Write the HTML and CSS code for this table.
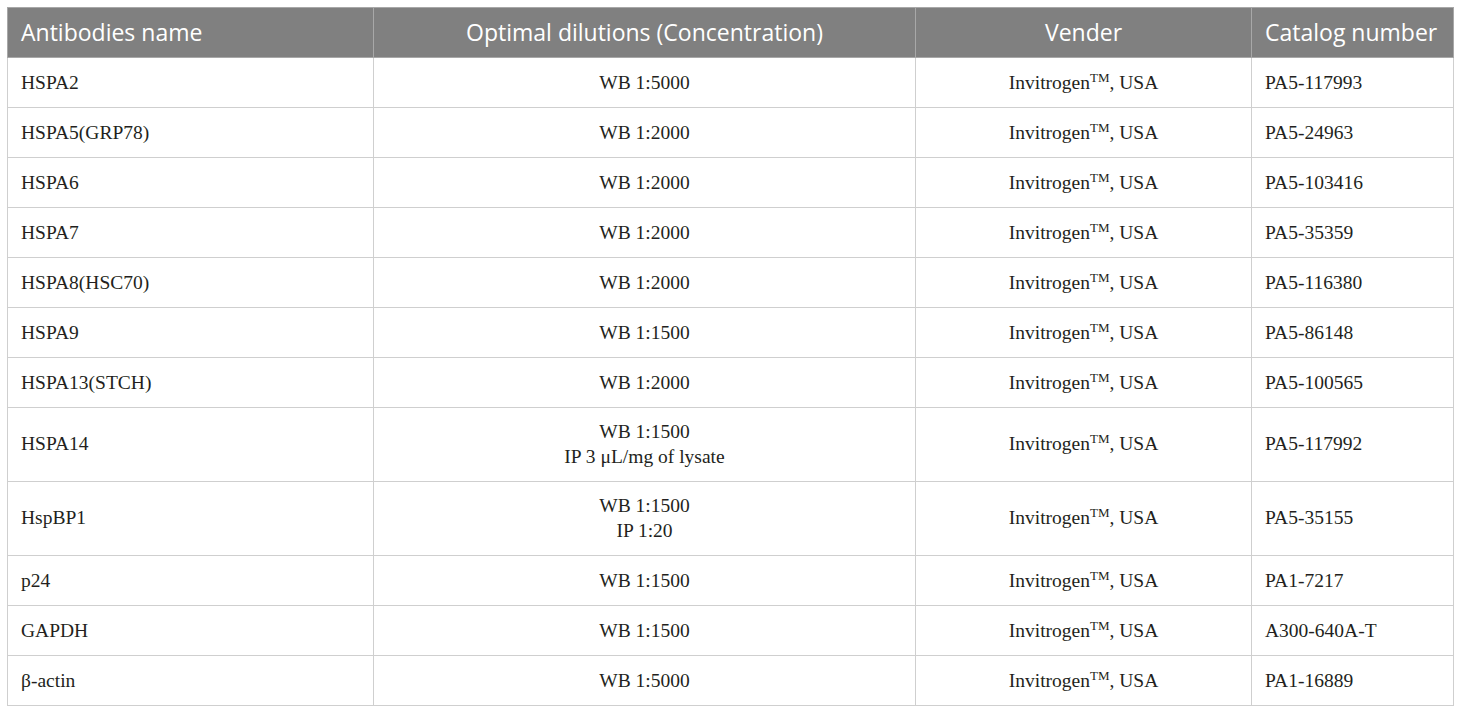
FILE: index.html
```html
<!DOCTYPE html>
<html>
<head>
<meta charset="utf-8">
<link rel="stylesheet" href="styles.css">
</head>
<body>
<table class="ab-table">
  <colgroup>
    <col class="c1"><col class="c2"><col class="c3"><col class="c4">
  </colgroup>
  <thead>
    <tr>
      <th class="left">Antibodies name</th>
      <th>Optimal dilutions (Concentration)</th>
      <th>Vender</th>
      <th class="left">Catalog number</th>
    </tr>
  </thead>
  <tbody>
    <tr><td class="left">HSPA2</td><td>WB 1:5000</td><td>Invitrogen<sup>TM</sup>, USA</td><td class="left">PA5-117993</td></tr>
    <tr><td class="left">HSPA5(GRP78)</td><td>WB 1:2000</td><td>Invitrogen<sup>TM</sup>, USA</td><td class="left">PA5-24963</td></tr>
    <tr><td class="left">HSPA6</td><td>WB 1:2000</td><td>Invitrogen<sup>TM</sup>, USA</td><td class="left">PA5-103416</td></tr>
    <tr><td class="left">HSPA7</td><td>WB 1:2000</td><td>Invitrogen<sup>TM</sup>, USA</td><td class="left">PA5-35359</td></tr>
    <tr><td class="left">HSPA8(HSC70)</td><td>WB 1:2000</td><td>Invitrogen<sup>TM</sup>, USA</td><td class="left">PA5-116380</td></tr>
    <tr><td class="left">HSPA9</td><td>WB 1:1500</td><td>Invitrogen<sup>TM</sup>, USA</td><td class="left">PA5-86148</td></tr>
    <tr><td class="left">HSPA13(STCH)</td><td>WB 1:2000</td><td>Invitrogen<sup>TM</sup>, USA</td><td class="left">PA5-100565</td></tr>
    <tr class="two"><td class="left">HSPA14</td><td>WB 1:1500<br>IP 3 μL/mg of lysate</td><td>Invitrogen<sup>TM</sup>, USA</td><td class="left">PA5-117992</td></tr>
    <tr class="two"><td class="left">HspBP1</td><td>WB 1:1500<br>IP 1:20</td><td>Invitrogen<sup>TM</sup>, USA</td><td class="left">PA5-35155</td></tr>
    <tr><td class="left">p24</td><td>WB 1:1500</td><td>Invitrogen<sup>TM</sup>, USA</td><td class="left">PA1-7217</td></tr>
    <tr><td class="left">GAPDH</td><td>WB 1:1500</td><td>Invitrogen<sup>TM</sup>, USA</td><td class="left">A300-640A-T</td></tr>
    <tr><td class="left">β-actin</td><td>WB 1:5000</td><td>Invitrogen<sup>TM</sup>, USA</td><td class="left">PA1-16889</td></tr>
  </tbody>
</table>
</body>
</html>
```

FILE: styles.css
```css
html, body {
  margin: 0;
  padding: 0;
  background: #ffffff;
}
body {
  padding: 7px 0 0 7px;
}
.ab-table {
  border-collapse: collapse;
  table-layout: fixed;
  width: 1446px;
  font-family: "Liberation Serif", "Times New Roman", serif;
  font-size: 19.5px;
  color: #231f20;
}
.c1 { width: 366px; }
.c2 { width: 542px; }
.c3 { width: 336px; }
.c4 { width: 202px; }
.ab-table th,
.ab-table td {
  border: 1px solid #cfcfcf;
  padding: 12px 13px;
  line-height: 25px;
  text-align: center;
  vertical-align: middle;
  white-space: nowrap;
}
.ab-table .two td {
  line-height: 24.5px;
}
.ab-table th {
  background: #808080;
  color: #ffffff;
  font-family: "Open Sans", "Liberation Sans", sans-serif;
  font-weight: 400;
  font-size: 23px;
  line-height: 24px;
  padding-bottom: 13px;
  border-color: #a8a8a8;
}
.ab-table .left {
  text-align: left;
}
.ab-table sup {
  font-size: 13px;
  line-height: 0;
  vertical-align: 7px;
}
```
